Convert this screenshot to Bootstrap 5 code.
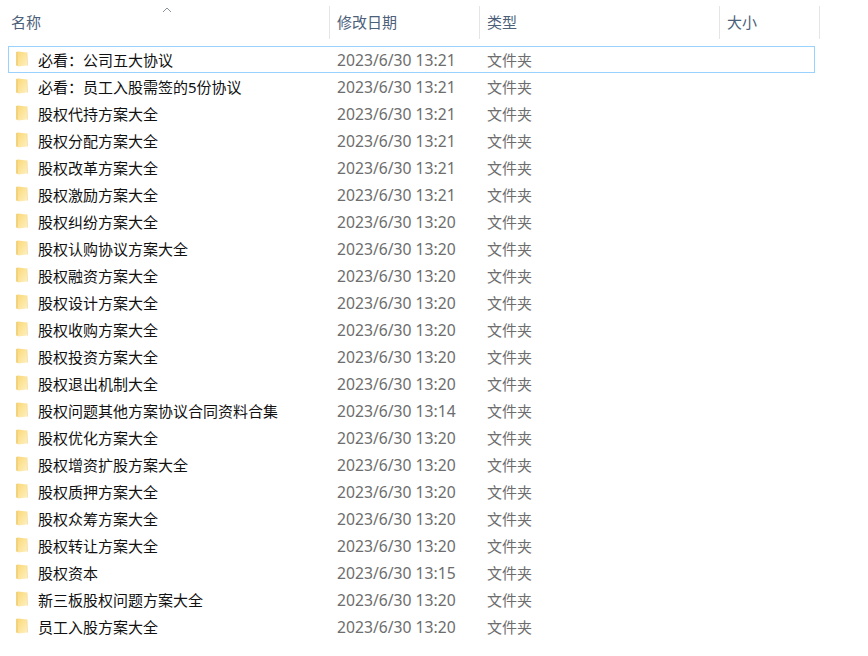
<!doctype html>
<html lang="zh"><head><meta charset="utf-8"><title>文件夹</title>
<link href="https://cdn.jsdelivr.net/npm/bootstrap@5.3.0/dist/css/bootstrap.min.css" rel="stylesheet">
<style>
html,body{background:#fff;overflow:hidden}
body{font:15px/27px "Noto Sans","Noto Sans CJK SC",sans-serif;height:656px;color:#111}
.explorer{width:820px;padding-top:6px}
.headrow{height:33px;margin-bottom:7px;color:#4c607a;position:relative}
.sortcaret{position:absolute;left:162px;top:1px;width:10px;height:6px}
.headcell{height:33px;line-height:32px;border-right:1px solid #e5e5e5;padding-left:7px;flex:none}
.c1{width:330px;padding-left:11px}.c2{width:150px}.c3{width:240px}.c4{width:100px}
.filerow{height:27px;margin-left:8px;width:807px;border:1px solid transparent;padding-left:6px}
.filerow.picked{border-color:#99d1ff}
.foldericon{width:14px;height:16px;flex:none;margin-right:9px;margin-top:-2px}
.fname{width:299px;flex:none;color:#111;white-space:nowrap}
.fdate{width:150px;flex:none;color:#6d6d6d;font-size:15.7px}
.ftype{flex:none;color:#6d6d6d}
.filerow>span{line-height:25px;padding-top:2px}
</style></head><body>
<svg width="0" height="0" class="position-absolute"><defs>
<linearGradient id="fg" x1="0" x2="1" y1="0" y2="1"><stop offset="0" stop-color="#fad97c"/><stop offset=".55" stop-color="#fde6a0"/><stop offset="1" stop-color="#fdf0c8"/></linearGradient>
<symbol id="fold" viewBox="0 0 14 16">
<path d="M1 1 L1 14.5 L3 15 L3 .5 Z" fill="#f3d27e"/>
<path d="M3 .5 L12 1.5 L12.5 14.5 L3 15.5 Z" fill="url(#fg)"/>
<path d="M12 1.5 L12.5 14.5" stroke="#f1dc9f" stroke-width=".8" fill="none"/>
</symbol></defs></svg>
<div class="explorer" id="app">
<div class="headrow d-flex">
<svg class="sortcaret" viewBox="0 0 10 6"><path d="M1 5 L5 1 L9 5" fill="none" stroke="#8a8f98" stroke-width="1"/></svg>
<div class="headcell c1">名称</div><div class="headcell c2">修改日期</div><div class="headcell c3">类型</div><div class="headcell c4">大小</div>
</div>
<div id="rows"></div>
</div>
<script>
const d=[["必看：公司五大协议","13:21"],["必看：员工入股需签的5份协议","13:21"],["股权代持方案大全","13:21"],["股权分配方案大全","13:21"],["股权改革方案大全","13:21"],["股权激励方案大全","13:21"],["股权纠纷方案大全","13:20"],["股权认购协议方案大全","13:20"],["股权融资方案大全","13:20"],["股权设计方案大全","13:20"],["股权收购方案大全","13:20"],["股权投资方案大全","13:20"],["股权退出机制大全","13:20"],["股权问题其他方案协议合同资料合集","13:14"],["股权优化方案大全","13:20"],["股权增资扩股方案大全","13:20"],["股权质押方案大全","13:20"],["股权众筹方案大全","13:20"],["股权转让方案大全","13:20"],["股权资本","13:15"],["新三板股权问题方案大全","13:20"],["员工入股方案大全","13:20"]];
document.getElementById('rows').innerHTML=d.map((r,i)=>`<div class="filerow d-flex align-items-center${i==0?' picked':''}"><svg class="foldericon"><use href="#fold"/></svg><span class="fname">${r[0]}</span><span class="fdate">2023/6/30 ${r[1]}</span><span class="ftype">文件夹</span></div>`).join('');
</script>
<script src="https://cdn.jsdelivr.net/npm/bootstrap@5.3.0/dist/js/bootstrap.bundle.min.js"></script>
</body></html>
